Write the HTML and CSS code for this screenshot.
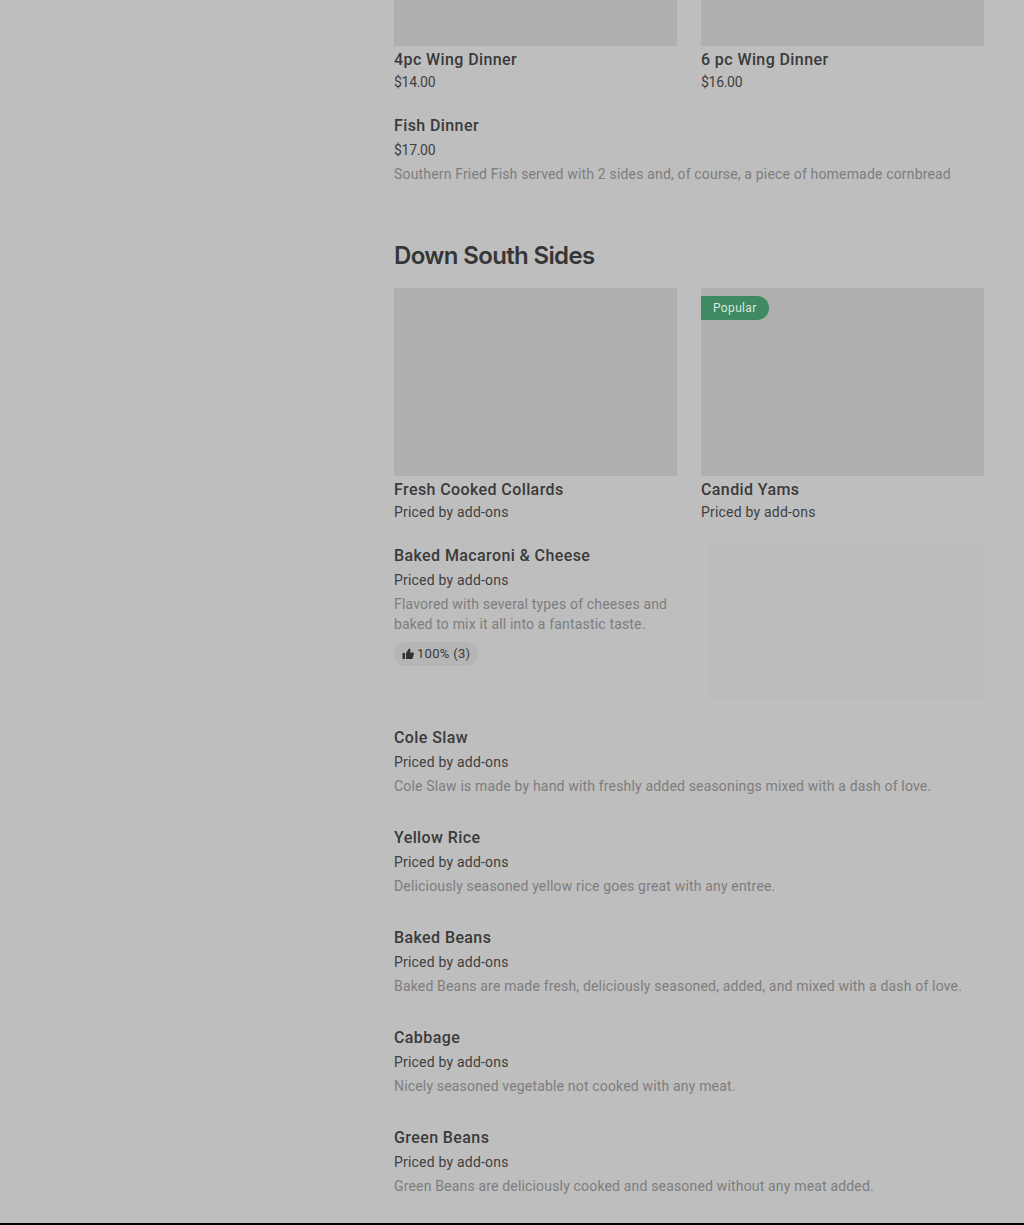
FILE: index.html
```html
<!DOCTYPE html>
<html lang="en">
<head>
    <meta charset="UTF-8">
    <meta name="viewport" content="width=device-width, initial-scale=1.0">
    <title>Menu</title>
    <link rel="stylesheet" href="styles.css">
</head>
<body>
    <main class="menu">
        <div class="card-grid">
            <div class="card">
                <div class="card-img cut"></div>
                <h3>4pc Wing Dinner</h3>
                <p class="price amount">$14.00</p>
            </div>
            <div class="card">
                <div class="card-img cut"></div>
                <h3>6 pc Wing Dinner</h3>
                <p class="price amount">$16.00</p>
            </div>
        </div>

        <div class="item after-cards">
            <h3>Fish Dinner</h3>
            <p class="price amount">$17.00</p>
            <p class="desc">Southern Fried Fish served with 2 sides and, of course, a piece of homemade cornbread</p>
        </div>

        <h2>Down South Sides</h2>

        <div class="card-grid">
            <div class="card">
                <div class="card-img"></div>
                <h3>Fresh Cooked Collards</h3>
                <p class="price">Priced by add-ons</p>
            </div>
            <div class="card">
                <div class="card-img">
                    <span class="badge">Popular</span>
                </div>
                <h3>Candid Yams</h3>
                <p class="price">Priced by add-ons</p>
            </div>
        </div>

        <div class="item-row after-cards">
            <div class="item-text">
                <h3>Baked Macaroni &amp; Cheese</h3>
                <p class="price">Priced by add-ons</p>
                <p class="desc">Flavored with several types of cheeses and baked to mix it all into a fantastic taste.</p>
                <span class="rating">
                    <svg width="12" height="12" viewBox="0 0 24 24"><path d="M1 10h5v12H1zM8 22V10l6-9c2 0 3 1.500 3 3.500L16 9h6c1.200 0 2 1 2 2.200l-2.500 9C21.200 21.300 20.400 22 19.300 22z"/></svg>
                    100% (3)
                </span>
            </div>
            <div class="item-thumb"></div>
        </div>

        <div class="item">
            <h3>Cole Slaw</h3>
            <p class="price">Priced by add-ons</p>
            <p class="desc">Cole Slaw is made by hand with freshly added seasonings mixed with a dash of love.</p>
        </div>
        <div class="item">
            <h3>Yellow Rice</h3>
            <p class="price">Priced by add-ons</p>
            <p class="desc">Deliciously seasoned yellow rice goes great with any entree.</p>
        </div>
        <div class="item">
            <h3>Baked Beans</h3>
            <p class="price">Priced by add-ons</p>
            <p class="desc">Baked Beans are made fresh, deliciously seasoned, added, and mixed with a dash of love.</p>
        </div>
        <div class="item">
            <h3>Cabbage</h3>
            <p class="price">Priced by add-ons</p>
            <p class="desc">Nicely seasoned vegetable not cooked with any meat.</p>
        </div>
        <div class="item">
            <h3>Green Beans</h3>
            <p class="price">Priced by add-ons</p>
            <p class="desc">Green Beans are deliciously cooked and seasoned without any meat added.</p>
        </div>
    </main>
    <div class="footer-edge"></div>
</body>
</html>
```

FILE: styles.css
```css
html, body { height: 100%; }
body { margin: 0; padding: 0; background-color: #bebebe; font-family: Roboto, "Noto Sans", sans-serif; color: #333; display: flex; flex-direction: column; overflow: hidden; }
h2, h3, p { margin: 0; }
.menu { flex: 1; margin-left: 394px; width: 590px; }
h2 { font-family: Inter, sans-serif; font-size: 24px; line-height: 32px; font-weight: 600; letter-spacing: -0.65px; color: #363636; margin-top: 56px; margin-bottom: 16px; }
h3 { font-size: 16px; line-height: 24px; font-weight: 500; letter-spacing: 0.4px; color: #3a3a3a; }
.price { font-size: 14px; line-height: 20px; letter-spacing: 0.2px; color: #3f3f3f; }
.price.amount { letter-spacing: -0.3px; }
.desc { font-size: 14px; line-height: 20px; letter-spacing: 0.17px; color: #7d7d7d; }
.card-grid { display: grid; grid-template-columns: 283px 283px; gap: 24px; }
.card-img { height: 188px; background-color: #afafaf; position: relative; }
.card-img.cut { height: 46px; }
.card h3 { margin-top: 2px; }
.item { margin-top: 30px; }
.item .price, .item-text .price { margin-top: 2px; }
.item .desc, .item-text .desc { margin-top: 4px; }
.item.after-cards { margin-top: 22px; }
.item-row { display: flex; justify-content: space-between; height: 157px; margin-bottom: -5px; }
.item-row.after-cards { margin-top: 22px; }
.item-text { width: 283px; }
.item-thumb { width: 276px; height: 156px; margin-top: 1px; background-color: #bcbcbc; }
.rating { display: inline-flex; align-items: center; gap: 3px; height: 23px; padding: 0 8px 1px; margin-top: 8px; border-radius: 12px; background-color: #b5b5b5; font-size: 13px; letter-spacing: 0.3px; color: #3a3a3a; }
.rating svg { fill: #333; }
.badge { position: absolute; left: 0; top: 8px; height: 24px; line-height: 24px; padding: 0 12px; background-color: #3f8a63; color: #d8e6de; font-size: 12px; letter-spacing: 0.35px; border-radius: 0 12px 12px 0; }
.footer-edge { height: 2px; background-color: #000; flex-shrink: 0; }
```
